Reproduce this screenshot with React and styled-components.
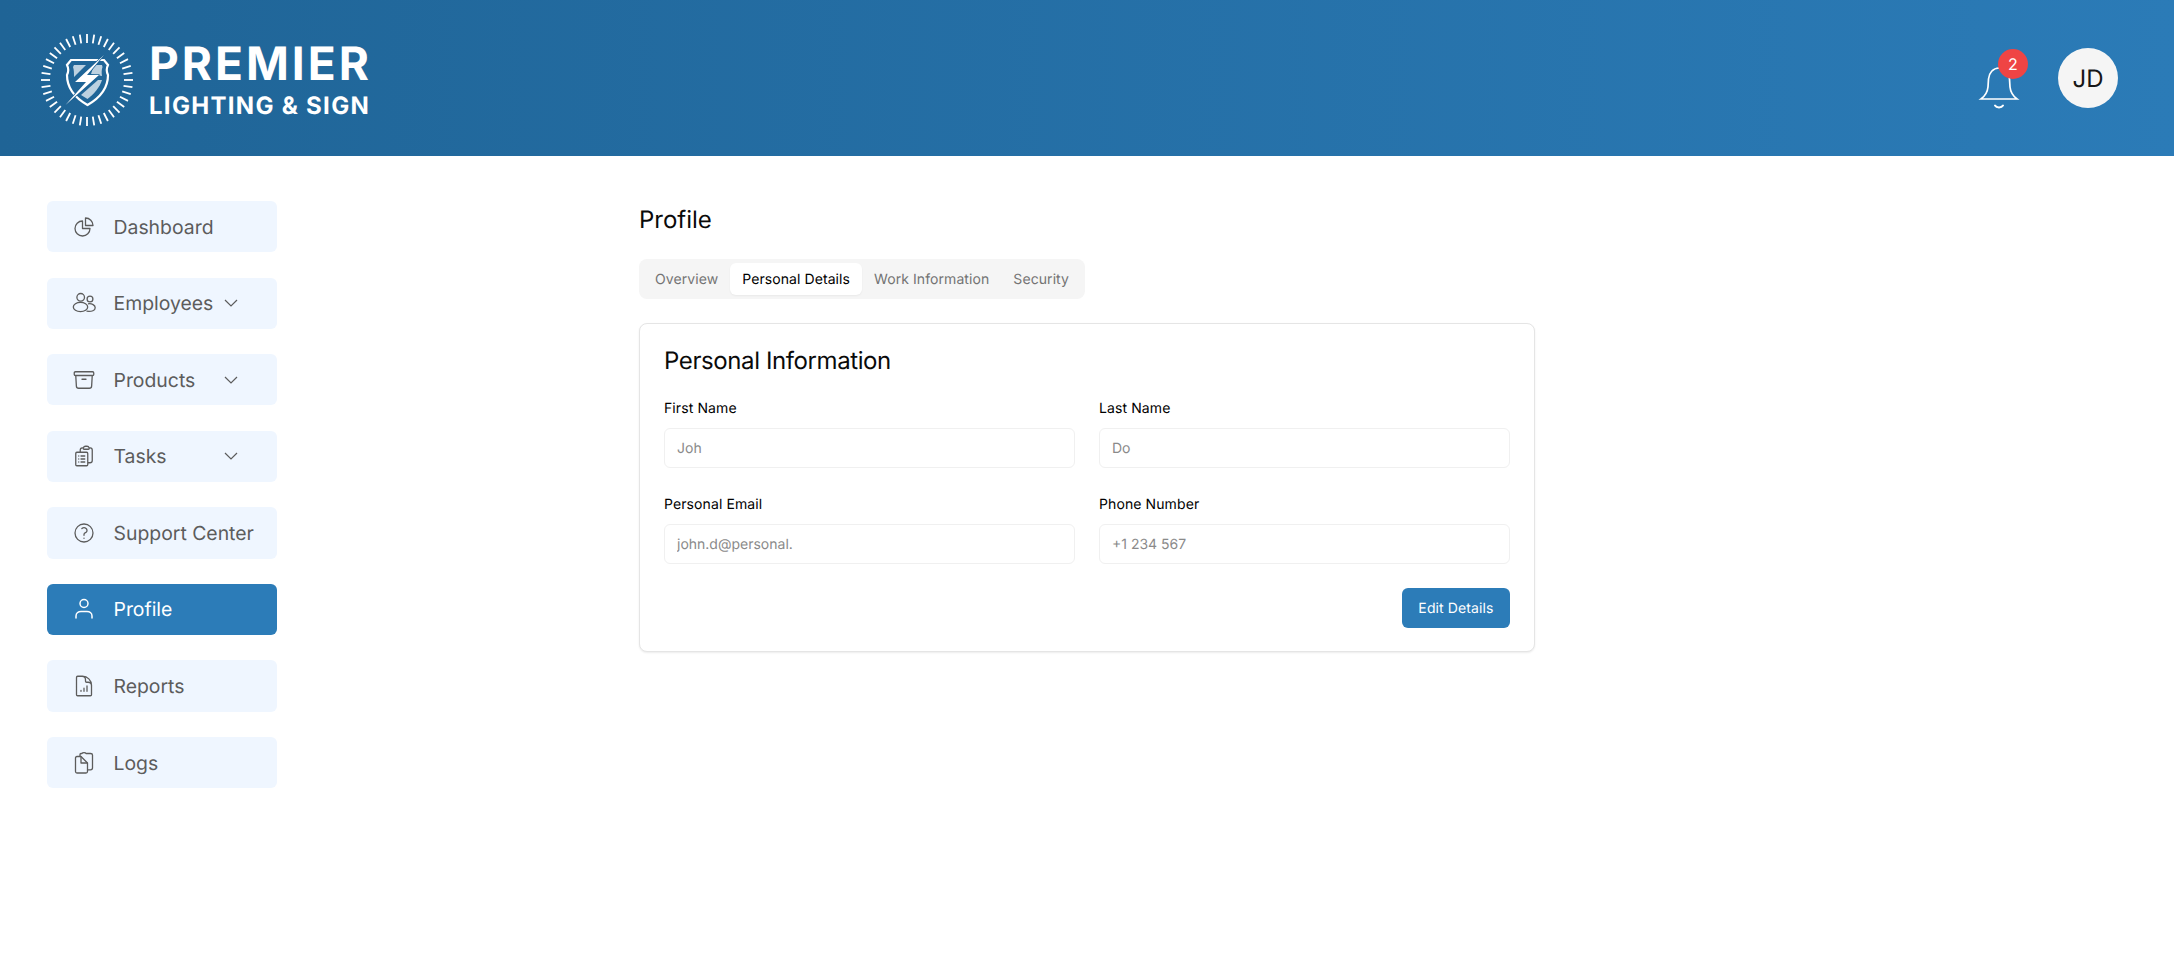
import React from "react";
import styled, { createGlobalStyle } from "styled-components";
import {
  HiOutlineChartPie,
  HiOutlineArchiveBox,
  HiOutlineClipboardDocumentList,
  HiOutlineQuestionMarkCircle,
  HiOutlineDocumentChartBar,
} from "react-icons/hi2";

const GlobalStyle = createGlobalStyle`
  * { box-sizing: border-box; }
  body {
    margin: 0;
    background: #fff;
    font-family: Inter, "Liberation Sans", sans-serif;
    text-rendering: geometricPrecision;
  }
`;

const Header = styled.header`
  height: 156px;
  padding: 0 56px 0 41px;
  display: flex;
  align-items: center;
  justify-content: space-between;
  background: linear-gradient(90deg, #1f6496 0%, #2b7bb7 100%);
`;

const Brand = styled.div`
  display: flex;
  align-items: center;
  gap: 16px;
`;

const LogoMark = styled.svg`
  margin-top: 4px;
`;

const BrandText = styled.div`
  display: flex;
  flex-direction: column;
  margin-top: 3px;
  color: #fff;
  font-weight: 700;
`;

const BrandTop = styled.span`
  font-size: 46px;
  line-height: 52px;
  letter-spacing: 3px;
`;

const BrandBottom = styled.span`
  font-size: 24px;
  line-height: 30px;
  letter-spacing: 1.3px;
  margin-top: 1px;
`;

const HeaderActions = styled.div`
  display: flex;
  align-items: center;
  gap: 37px;
`;

const BellWrap = styled.div`
  position: relative;
  width: 44px;
  height: 48px;
  margin-top: 22px;
  display: flex;
  justify-content: center;
`;

const Badge = styled.span`
  position: absolute;
  top: -16px;
  right: -7px;
  width: 30px;
  height: 30px;
  border-radius: 50%;
  background: #ef4444;
  color: #fff;
  font-size: 16px;
  display: flex;
  align-items: center;
  justify-content: center;
`;

const Avatar = styled.div`
  width: 60px;
  height: 60px;
  border-radius: 50%;
  background: #f5f5f5;
  color: #171717;
  font-size: 24px;
  display: flex;
  align-items: center;
  justify-content: center;
`;

const Page = styled.div`
  display: flex;
`;

const Sidebar = styled.nav`
  flex-shrink: 0;
  margin-left: 47px;
  width: 230px;
  padding-top: 45px;
  display: flex;
  flex-direction: column;
  gap: 25.17px;
`;

const NavItem = styled.div`
  height: 51.4px;
  padding: 0 20px 0 25px;
  display: flex;
  align-items: center;
  border-radius: 6px;
  font-size: 19.4px;
  white-space: nowrap;
  background: ${(p) => (p.$active ? "#2c7cb8" : "#eff6ff")};
  color: ${(p) => (p.$active ? "#fff" : "#5c5c5c")};
`;

const NavIcon = styled.span`
  width: 24px;
  height: 24px;
  margin-right: 17.5px;
  display: flex;
  align-items: center;
  justify-content: center;
  svg {
    width: 24px;
    height: 24px;
  }
`;

const Chevron = styled.svg`
  width: 20px;
  height: 20px;
  margin-left: auto;
  margin-right: 16px;
`;

const Content = styled.main`
  margin-left: 362px;
  width: 896px;
  padding-top: 48px;
`;

const Title = styled.h1`
  margin: 0 0 23px;
  font-size: 24px;
  line-height: 32px;
  font-weight: 400;
  color: #0a0a0a;
`;

const Tabs = styled.div`
  display: inline-flex;
  height: 40px;
  padding: 4px;
  border-radius: 8px;
  background: #f5f5f5;
  vertical-align: top;
`;

const Tab = styled.div`
  padding: 0 12px;
  display: flex;
  align-items: center;
  border-radius: 6px;
  font-size: 14px;
  letter-spacing: 0.08px;
  background: ${(p) => (p.$active ? "#fff" : "transparent")};
  color: ${(p) => (p.$active ? "#000" : "#737373")};
  box-shadow: ${(p) => (p.$active ? "0 1px 2px rgba(0,0,0,.05)" : "none")};
`;

const Card = styled.section`
  margin-top: 24px;
  padding: 20.5px 24px 23px;
  border: 1px solid #e5e5e5;
  border-radius: 8px;
  background: #fff;
  box-shadow: 0 1px 2px rgba(0, 0, 0, 0.08);
`;

const CardTitle = styled.h2`
  margin: 0 0 22.5px;
  font-size: 24px;
  line-height: 32px;
  font-weight: 400;
  letter-spacing: -0.4px;
  color: #0a0a0a;
`;

const FieldGrid = styled.div`
  display: grid;
  grid-template-columns: 1fr 1fr;
  column-gap: 24px;
  row-gap: 27.5px;
`;

const Field = styled.label`
  display: flex;
  flex-direction: column;
  gap: 9px;
`;

const FieldLabel = styled.span`
  font-size: 14px;
  line-height: 20px;
  letter-spacing: 0.1px;
  color: #000;
`;

const Input = styled.input`
  height: 39.5px;
  padding: 1px 12px 0;
  border: 1px solid #f0f0f0;
  border-radius: 6px;
  background: #fff;
  font-family: inherit;
  font-size: 14px;
  text-rendering: geometricPrecision;
  &::placeholder {
    color: #8a8a8a;
    opacity: 1;
  }
`;

const Actions = styled.div`
  margin-top: 24.5px;
  display: flex;
  justify-content: flex-end;
`;

const PrimaryButton = styled.button`
  height: 40px;
  width: 108px;
  border: 0;
  border-radius: 6px;
  background: #2c7cb8;
  color: #fff;
  font-family: inherit;
  font-size: 14px;
  letter-spacing: 0.12px;
  text-rendering: geometricPrecision;
`;

const rays = Array.from({ length: 40 }, (_, i) => (i * 360) / 40);

function Logo() {
  return (
    <LogoMark width="92" height="92" viewBox="0 0 92 92">
      {rays.map((deg) => (
        <rect key={deg} x="45.1" y="0" width="1.8" height="9" fill="#fff" transform={`rotate(${deg} 46 46)`} />
      ))}
      <path
        d="M30 26H63L67 31C65 35 65.500 38 67 41C67 55 57 65 46.500 71C36 65 26 55 26 41C27.500 38 28 35 26 31Z"
        fill="none"
        stroke="#fff"
        strokeWidth="2.200"
      />
      <path d="M33 31H45L33 43C33 39 33 36 32 33Z" fill="#fff" opacity=".7" />
      <path d="M53 31H61L61.500 33C60.500 36 60.500 39 61 42L50 40Z" fill="#fff" opacity=".7" />
      <path d="M40 61L57 46H61C59 53 53 60 46.500 65Z" fill="#fff" opacity=".7" />
      <path
        d="M63 21L34 48H45L24.500 71L58 41H46Z"
        fill="#fff"
        stroke="#1f6496"
        strokeWidth="1.500"
        strokeLinejoin="round"
        paintOrder="stroke"
      />
    </LogoMark>
  );
}

function Bell() {
  return (
    <svg width="44" height="48" viewBox="0 0 44 48" fill="none" stroke="#fff" strokeWidth="1.700" strokeLinecap="round">
      <path d="M4 34H40C36 31 33.500 27 33 22L32.500 14C32 8 28 3 22 3S12 8 11.500 14L11 22C10.500 27 8 31 4 34Z" />
      <path d="M18 40.500C19.500 43 24.500 43 26 40.500" strokeWidth="2" />
    </svg>
  );
}

function UsersIcon() {
  return (
    <svg viewBox="0 0 24 24" fill="none" stroke="currentColor" strokeWidth="1.300">
      <circle cx="8.700" cy="6.300" r="3.800" />
      <circle cx="18" cy="8" r="2.900" />
      <ellipse cx="8.500" cy="16" rx="7.200" ry="4.700" />
      <path d="M16 12.800C20 12.300 23.200 14 23.200 16.800C23.200 19.500 20 20.800 14.500 20.200" />
    </svg>
  );
}

function UserIcon() {
  return (
    <svg viewBox="0 0 24 24" fill="none" stroke="currentColor" strokeWidth="1.500" strokeLinecap="round">
      <circle cx="12" cy="6.500" r="4" />
      <path d="M4 21V19C4 16 6.500 14.500 9 14.500H15C17.500 14.500 20 16 20 19V21" />
    </svg>
  );
}

function LogsIcon() {
  return (
    <svg viewBox="0 0 24 24" fill="none" stroke="currentColor" strokeWidth="1.300" strokeLinejoin="round">
      <path d="M9 5.500H5C4 5.500 3.500 6 3.500 7V20.500C3.500 21.500 4 22 5 22H14C15 22 15.500 21.500 15.500 20.500V12Z" />
      <path d="M9 5.500V12H15.500" />
      <path d="M8 5V3.500C8 2.800 8.500 2.500 9 2.500H10C10.500 1.200 13.500 1.200 14 2.500H18.500C19.500 2.500 20.500 3 20.500 4V17C20.500 18 19.500 18.800 18.500 18.800H15.500" />
    </svg>
  );
}

const navItems = [
  { label: "Dashboard", icon: <HiOutlineChartPie strokeWidth={1.3} /> },
  { label: "Employees", icon: <UsersIcon />, menu: true },
  { label: "Products", icon: <HiOutlineArchiveBox strokeWidth={1.3} />, menu: true },
  { label: "Tasks", icon: <HiOutlineClipboardDocumentList strokeWidth={1.3} />, menu: true },
  { label: "Support Center", icon: <HiOutlineQuestionMarkCircle strokeWidth={1.3} /> },
  { label: "Profile", icon: <UserIcon />, active: true },
  { label: "Reports", icon: <HiOutlineDocumentChartBar strokeWidth={1.3} /> },
  { label: "Logs", icon: <LogsIcon /> },
];

const tabs = ["Overview", "Personal Details", "Work Information", "Security"];

const fields = [
  { label: "First Name", placeholder: "Joh" },
  { label: "Last Name", placeholder: "Do" },
  { label: "Personal Email", placeholder: "john.d@personal." },
  { label: "Phone Number", placeholder: "+1 234 567" },
];

export default function App() {
  return (
    <>
      <GlobalStyle />
      <Header>
        <Brand>
          <Logo />
          <BrandText>
            <BrandTop>PREMIER</BrandTop>
            <BrandBottom>LIGHTING &amp; SIGN</BrandBottom>
          </BrandText>
        </Brand>
        <HeaderActions>
          <BellWrap>
            <Bell />
            <Badge>2</Badge>
          </BellWrap>
          <Avatar>JD</Avatar>
        </HeaderActions>
      </Header>
      <Page>
        <Sidebar>
          {navItems.map((item) => (
            <NavItem key={item.label} $active={item.active}>
              <NavIcon>{item.icon}</NavIcon>
              {item.label}
              {item.menu && (
                <Chevron viewBox="0 0 20 20" fill="none" stroke="currentColor" strokeWidth="1.200">
                  <path d="M4 7L10 13L16 7" />
                </Chevron>
              )}
            </NavItem>
          ))}
        </Sidebar>
        <Content>
          <Title>Profile</Title>
          <Tabs>
            {tabs.map((tab) => (
              <Tab key={tab} $active={tab === "Personal Details"}>
                {tab}
              </Tab>
            ))}
          </Tabs>
          <Card>
            <CardTitle>Personal Information</CardTitle>
            <FieldGrid>
              {fields.map((field) => (
                <Field key={field.label}>
                  <FieldLabel>{field.label}</FieldLabel>
                  <Input placeholder={field.placeholder} />
                </Field>
              ))}
            </FieldGrid>
            <Actions>
              <PrimaryButton>Edit Details</PrimaryButton>
            </Actions>
          </Card>
        </Content>
      </Page>
    </>
  );
}
